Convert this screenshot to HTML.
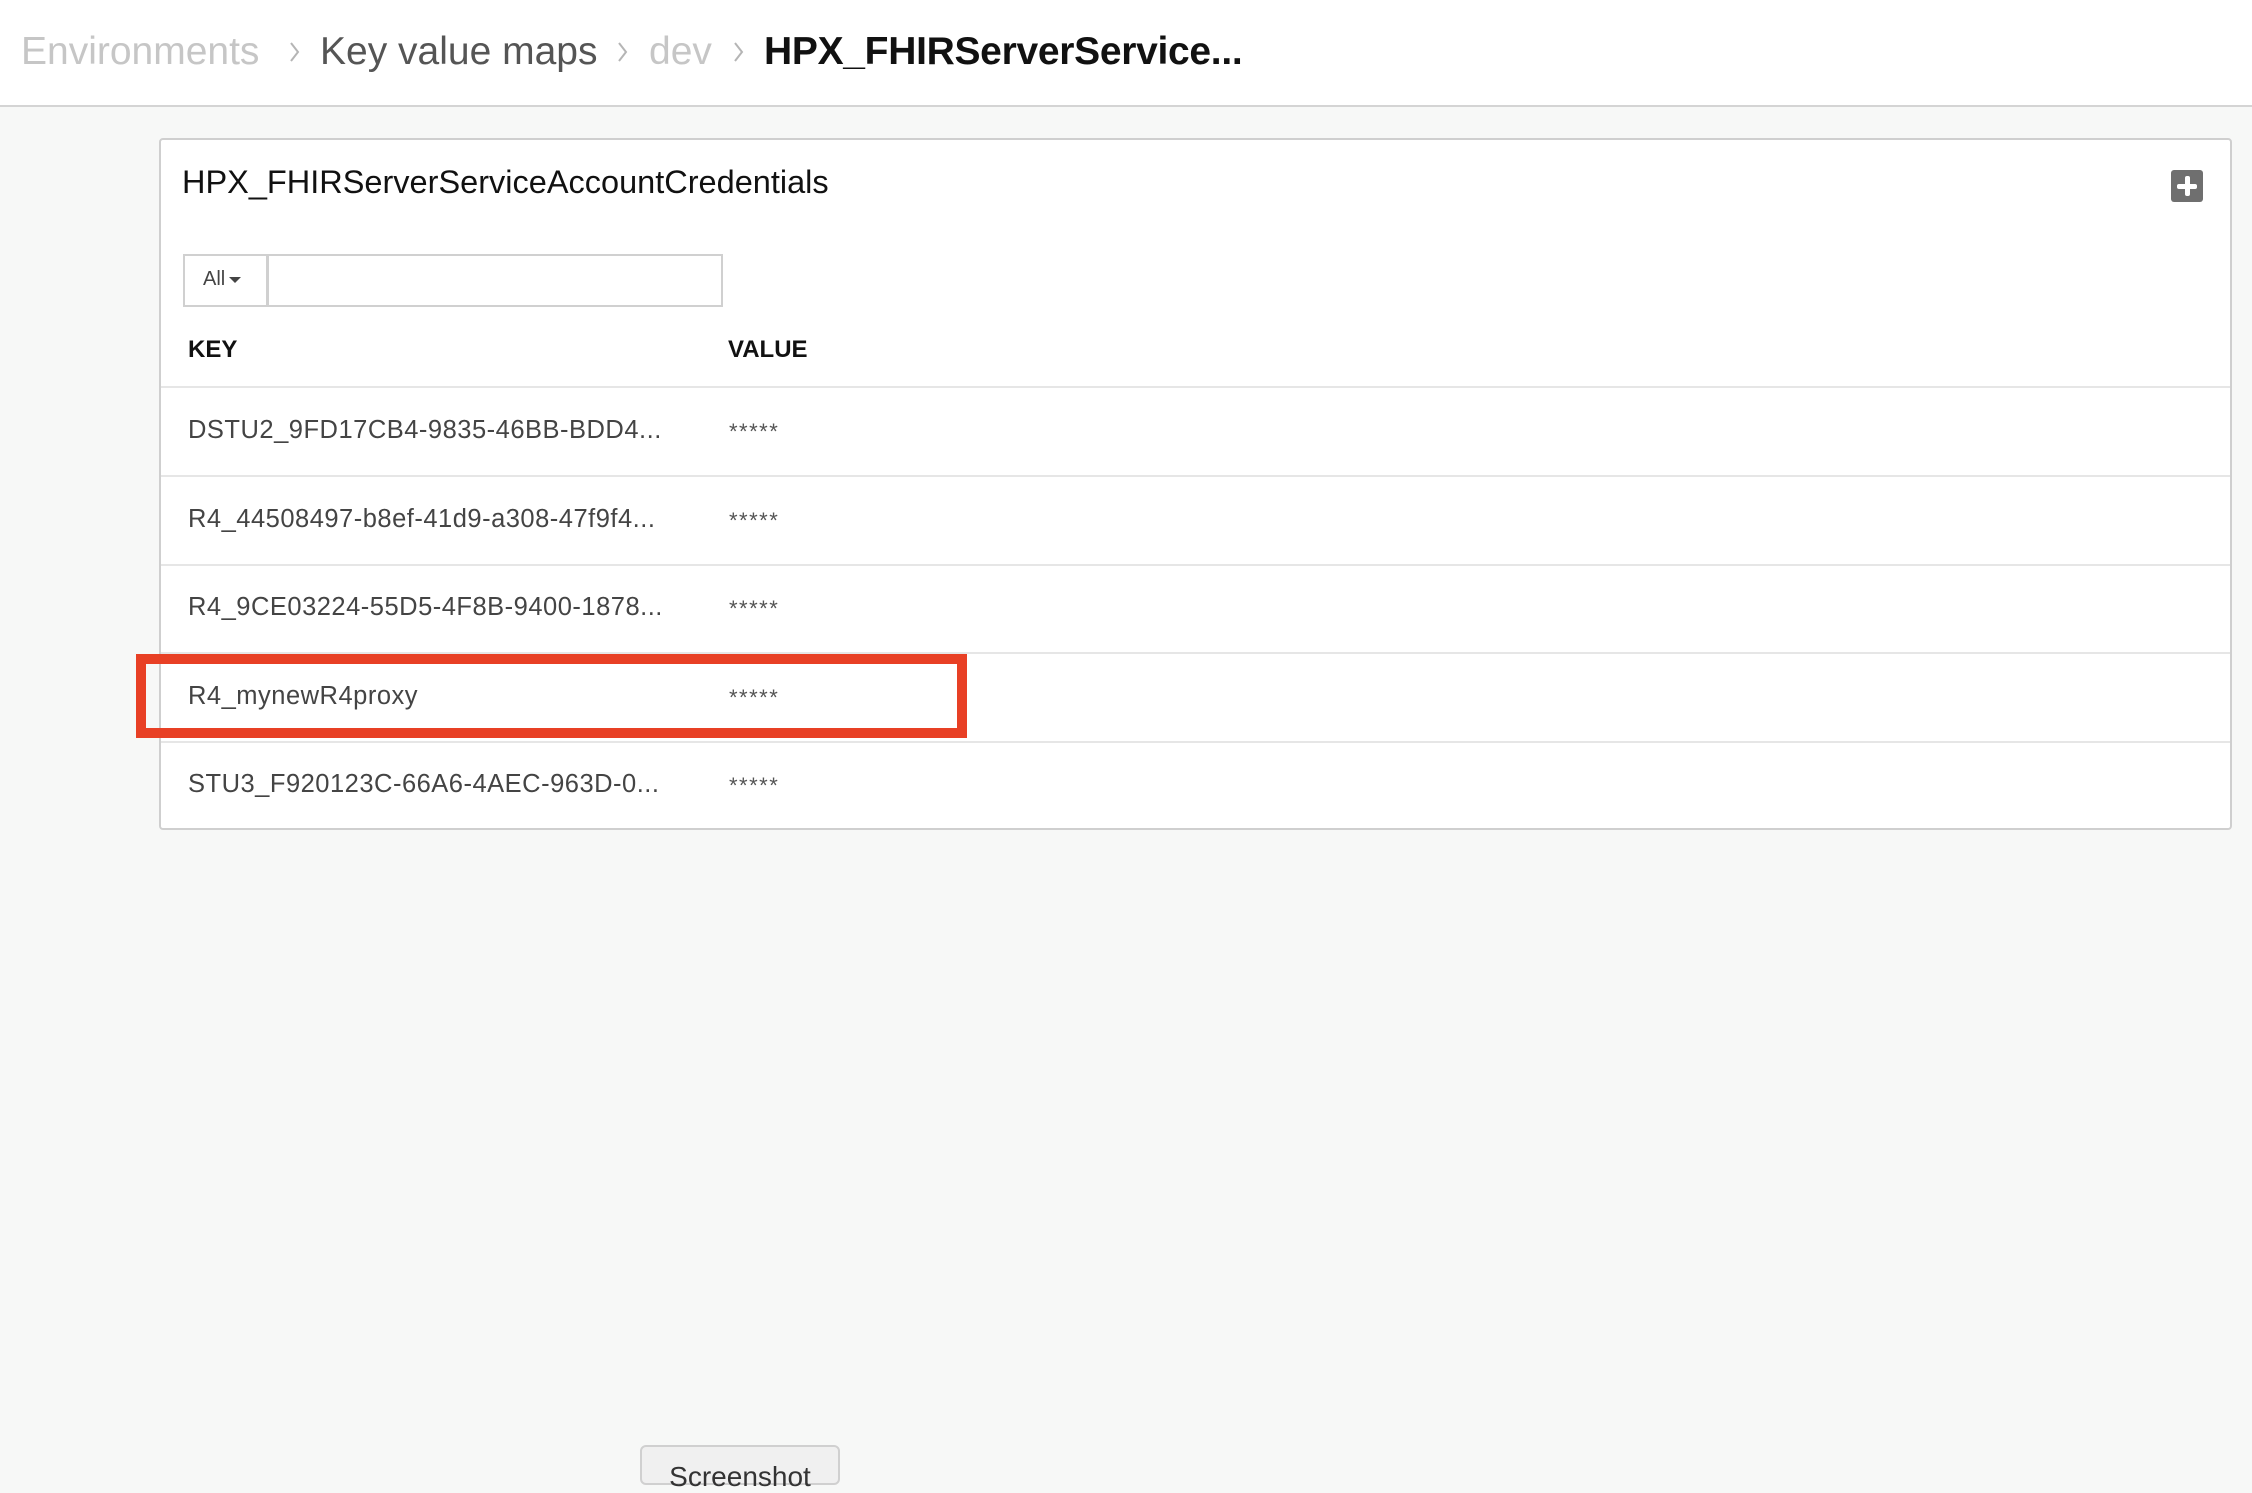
<!DOCTYPE html>
<html><head><meta charset="utf-8"><style>
*{margin:0;padding:0;box-sizing:border-box}
body{width:2252px;height:1468px;background:#f7f8f7;font-family:"Liberation Sans",sans-serif;position:relative;overflow:hidden}
.hdr{position:absolute;left:0;top:0;width:2252px;height:107px;background:#fff;border-bottom:2px solid #d4d4d4}
.bc{position:absolute;top:29px;font-size:39px;white-space:nowrap;line-height:46px}
.chev{position:absolute;top:37px;width:14px;height:30px}
.card{position:absolute;left:159px;top:138px;width:2073px;height:692px;background:#fff;border:2px solid #cfcfcf;border-radius:4px}
.title{position:absolute;left:21px;top:24px;font-size:32.5px;color:#111;white-space:nowrap}
.plus{position:absolute;left:2010px;top:30px;width:32px;height:32px;background:#6f6f6f;border-radius:3px}
.plus:before{content:"";position:absolute;left:14px;top:6px;width:5px;height:20px;background:#fff;border-radius:2px}
.plus:after{content:"";position:absolute;left:6px;top:14px;width:20px;height:5px;background:#fff;border-radius:2px}
.filter{position:absolute;left:22px;top:114px;width:540px;height:53px;border:2px solid #d0d0d0}
.filter .all{position:absolute;left:0;top:0;width:84px;height:49px;border-right:3px solid #d0d0d0;font-size:20px;color:#444;padding:12px 0 0 18px}
.tri{display:inline-block;width:0;height:0;border-left:6px solid transparent;border-right:6px solid transparent;border-top:6px solid #444;vertical-align:middle;margin-left:4px}
.th{position:absolute;top:196px;font-size:24px;font-weight:bold;color:#111}
.line{position:absolute;left:0;width:2069px;height:2px;background:#e6e6e6}
.k{position:absolute;left:27px;font-size:25.5px;color:#444;white-space:nowrap;letter-spacing:0.5px}
.v{position:absolute;left:568px;font-size:22px;color:#555;letter-spacing:1.5px}
.red{position:absolute;left:136px;top:654px;width:831px;height:84px;border:10px solid #e84025}
.btn{position:absolute;left:640px;top:1445px;width:200px;height:40px;background:#f0f0f0;border:2px solid #d0d0d0;border-radius:6px;font-size:28px;color:#333;text-align:center;padding-top:14px}
</style></head><body>
<div class="hdr">
<div class="bc" style="left:21px;color:#c6c6c6">Environments</div>
<svg class="chev" style="left:288px" viewBox="0 0 14 30"><path d="M3 6 L10 15 L3 24" fill="none" stroke="#b5b5b5" stroke-width="2"/></svg>
<div class="bc" style="left:320px;color:#555">Key value maps</div>
<svg class="chev" style="left:616px" viewBox="0 0 14 30"><path d="M3 6 L10 15 L3 24" fill="none" stroke="#b5b5b5" stroke-width="2"/></svg>
<div class="bc" style="left:649px;color:#c6c6c6">dev</div>
<svg class="chev" style="left:732px" viewBox="0 0 14 30"><path d="M3 6 L10 15 L3 24" fill="none" stroke="#b5b5b5" stroke-width="2"/></svg>
<div class="bc" style="left:764px;color:#111;font-weight:bold;letter-spacing:-0.3px">HPX_FHIRServerService...</div>
</div>
<div class="card">
<div class="title">HPX_FHIRServerServiceAccountCredentials</div>
<div class="plus"></div>
<div class="filter"><div class="all">All<span class="tri"></span></div></div>
<div class="th" style="left:27px">KEY</div>
<div class="th" style="left:567px">VALUE</div>
<div class="line" style="top:246px"></div>
<div class="k" style="top:276px">DSTU2_9FD17CB4-9835-46BB-BDD4...</div><div class="v" style="top:279px">*****</div>
<div class="line" style="top:335px"></div>
<div class="k" style="top:365px">R4_44508497-b8ef-41d9-a308-47f9f4...</div><div class="v" style="top:368px">*****</div>
<div class="line" style="top:424px"></div>
<div class="k" style="top:453px">R4_9CE03224-55D5-4F8B-9400-1878...</div><div class="v" style="top:456px">*****</div>
<div class="line" style="top:512px"></div>
<div class="k" style="top:542px">R4_mynewR4proxy</div><div class="v" style="top:545px">*****</div>
<div class="line" style="top:601px"></div>
<div class="k" style="top:630px">STU3_F920123C-66A6-4AEC-963D-0...</div><div class="v" style="top:633px">*****</div>
</div>
<div class="red"></div>
<div class="btn">Screenshot</div>
</body></html>
